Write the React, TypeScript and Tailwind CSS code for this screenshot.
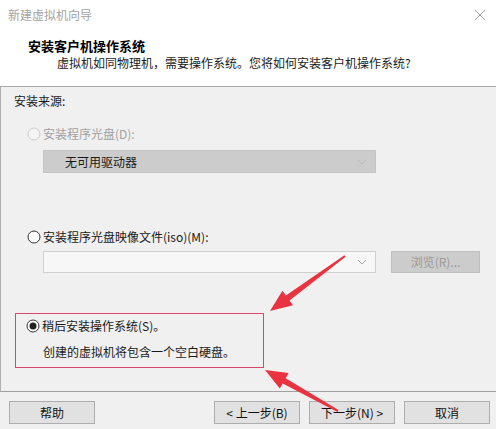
import React from "react";

const font = "font-['Microsoft_YaHei','Noto_Sans_CJK_SC',sans-serif]";

type RadioProps = { checked?: boolean; disabled?: boolean };

const Radio: React.FC<RadioProps> = ({ checked, disabled }) => (
  <svg width="14" height="14" viewBox="0 0 14 14" className="shrink-0">
    <circle
      cx="7"
      cy="7"
      r="6"
      fill={disabled ? "#f4f4f4" : "#ffffff"}
      stroke={disabled ? "#cccccc" : "#333333"}
      strokeWidth="1"
    />
    {checked && <circle cx="7" cy="7" r="3.5" fill="#222222" />}
  </svg>
);

const Chevron: React.FC<{ color: string }> = ({ color }) => (
  <svg width="10" height="6" viewBox="0 0 10 6">
    <path d="M1 1l4 4 4-4" fill="none" stroke={color} strokeWidth="1" />
  </svg>
);

const Button: React.FC<{ label: string; className?: string }> = ({ label, className }) => (
  <button
    className={`h-[23px] w-[86px] bg-[#e1e1e1] border border-[#adadad] text-[12px] text-[#111] flex items-center justify-center ${className ?? ""}`}
  >
    {label}
  </button>
);

export default function App() {
  return (
    <div className={`relative w-[496px] h-[429px] overflow-hidden bg-[#f0f0f0] ${font} text-[12px] text-[#1a1a1a]`}>
      {/* en-tête blanc */}
      <div className="h-[87px] bg-white border-b border-[#a9a9a9]">
        <div className="h-[30px] flex items-center justify-between pl-[8px] pr-[10px]">
          <span className="text-[12px] text-[#a3a3a3]">新建虚拟机向导</span>
          <svg width="12" height="12" viewBox="0 0 12 12">
            <path d="M1 1l10 10M11 1L1 11" stroke="#a3a3a3" strokeWidth="1" />
          </svg>
        </div>
        <div className="mt-[7px] pl-[28px] leading-[17px] text-[13px] font-bold text-black">安装客户机操作系统</div>
        <div className="pl-[57px] leading-[17px] text-[12px] text-[#1a1a1a]">
          虚拟机如同物理机，需要操作系统。您将如何安装客户机操作系统?
        </div>
      </div>

      <div className="h-[304px] border-l border-[#b0b0b0] flex flex-col">
        <div className="pt-[6px] pl-[13px] leading-[16px]">安装来源:</div>

        {/* lecteur */}
        <div className="mt-[17px] pl-[26px] h-[16px] flex items-center gap-[2px] text-[#a0a0a0]">
          <Radio disabled />
          <span>安装程序光盘(D):</span>
        </div>
        <div className="mt-[8px] ml-[42px] w-[333px] h-[23px] bg-[#cccccc] border border-[#c4c4c4] flex items-center justify-between pl-[21px] pr-[8px]">
          <span className="text-[#1a1a1a]">无可用驱动器</span>
          <Chevron color="#b8b8b8" />
        </div>

        {/* image iso */}
        <div className="mt-[56px] pl-[26px] h-[16px] flex items-center gap-[2px]">
          <Radio />
          <span>安装程序光盘映像文件(iso)(M):</span>
        </div>
        <div className="mt-[6px] ml-[42px] flex items-center">
          <div className="w-[333px] h-[22px] bg-[#f7f7f7] border border-[#cfcfcf] flex items-center justify-end pr-[8px]">
            <Chevron color="#a8a8a8" />
          </div>
          <div className="ml-[15px] w-[89px] h-[22px] bg-[#cccccc] border border-[#bfbfbf] flex items-center justify-center text-[#9a9a9a]">
            浏览(R)...
          </div>
        </div>

        {/* installer plus tard */}
        <div className="mt-[40px] ml-[14px] w-[249px] h-[55px] bg-[#d9486c] p-px">
          <div className="h-full w-full bg-[#f0f0f0] flex flex-col pl-[10px]">
            <div className="mt-[4px] h-[16px] flex items-center gap-[2px]">
              <Radio checked />
              <span>稍后安装操作系统(S)。</span>
            </div>
            <div className="mt-[10px] pl-[17px] leading-[16px]">创建的虚拟机将包含一个空白硬盘。</div>
          </div>
        </div>
      </div>

      {/* pied */}
      <div className="border-t border-[#a0a0a0] h-[38px] flex items-start pt-[9px] pl-[9px] pr-[6px]">
        <Button label="帮助" />
        <div className="flex-1" />
        <Button label="< 上一步(B)" />
        <Button label="下一步(N) >" className="ml-[9px]" />
        <Button label="取消" className="ml-[9px]" />
      </div>

      {/* flèches rouges d'annotation */}
      <svg className="absolute inset-0 pointer-events-none" width="496" height="429" viewBox="0 0 496 429">
        <polygon
          points="270,311 293,305.3 289.5,300.4 345.6,256.8 344.4,255.2 285.9,295.6 282.4,290.7"
          fill="#ea3340"
        />
        <polygon
          points="265,370 279.8,388.6 282.7,383.4 337.5,411.9 338.5,410.1 285.7,378.2 288.6,373"
          fill="#ea3340"
        />
      </svg>
    </div>
  );
}
